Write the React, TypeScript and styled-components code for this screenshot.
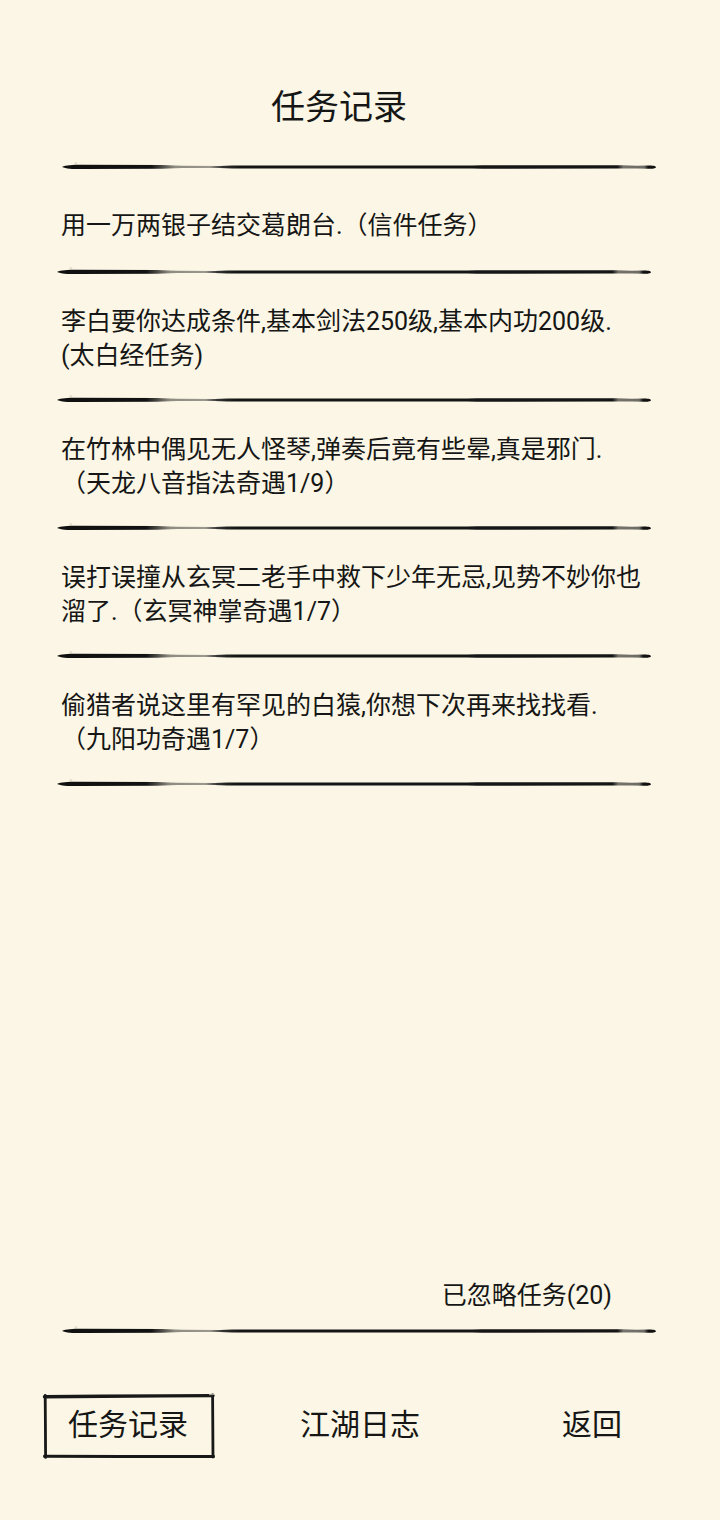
import React, { useId } from "react";
import styled, { createGlobalStyle } from "styled-components";

const PAPER = "#FBF6E5";
const INK = "#161616";

const GlobalStyle = createGlobalStyle`
  html, body {
    margin: 0;
    padding: 0;
    background: ${PAPER};
  }
  body {
    font-family: Roboto, "Noto Sans CJK SC", sans-serif;
    color: ${INK};
  }
`;

const Page = styled.div`
  width: 720px;
  height: 1520px;
  display: flex;
  flex-direction: column;
  background: ${PAPER};
  overflow: hidden;
`;

const Title = styled.h1`
  margin: 87px 42px 0 0;
  font-size: 34px;
  line-height: 40px;
  font-weight: 400;
  text-align: center;
`;

const Stroke = styled.svg<{ $offset: number; $gap?: number }>`
  display: block;
  flex: none;
  width: 594px;
  height: 10px;
  margin-left: ${(p) => p.$offset}px;
  margin-top: ${(p) => p.$gap ?? 0}px;
`;

/* Ink brush stroke used as a section divider */
const BrushLine: React.FC<{ offset: number; gap?: number }> = ({ offset, gap }) => {
  const id = useId().replace(/:/g, "");
  return (
    <Stroke $offset={offset} $gap={gap} viewBox="0 0 594 10" aria-hidden="true">
      <defs>
        <linearGradient id={`ink${id}`} gradientUnits="userSpaceOnUse" x1="0" y1="0" x2="594" y2="0">
          <stop offset="0" stopColor="#101010" />
          <stop offset="0.15" stopColor="#121212" />
          <stop offset="0.19" stopColor="#8f8c82" />
          <stop offset="0.25" stopColor="#9a978d" />
          <stop offset="0.27" stopColor="#333" />
          <stop offset="0.3" stopColor="#151515" />
          <stop offset="0.935" stopColor="#151515" />
          <stop offset="0.945" stopColor="#75736c" />
          <stop offset="0.98" stopColor="#6d6b65" />
          <stop offset="0.987" stopColor="#111" />
          <stop offset="1" stopColor="#111" />
        </linearGradient>
      </defs>
      <path
        fill={`url(#ink${id})`}
        d="M0,5 C4,3.1 10,2.8 20,2.8 L100,3.0 L120,3.8 L158,3.9 L170,3.4 L180,3.6 L410,3.6 L420,3.3 L560,3.3 L575,3.7 L586,3.5 C592,3.3 594,4.4 594,5.2 C594,6 592,6.9 586,6.7 L575,6.4 L560,6.6 L420,6.7 L410,6.4 L180,6.4 L170,6.6 L158,6.1 L120,6.0 L100,6.8 L20,7.1 C10,7.1 4,6.7 0,5 Z"
      />
      <ellipse cx="14" cy="0.9" rx="1.4" ry="0.5" fill="#c9c4b4" />
    </Stroke>
  );
};

const TaskList = styled.div`
  display: flex;
  flex-direction: column;
  margin-top: 11px;
`;

const TaskRow = styled.div`
  display: flex;
  flex-direction: column;
`;

const TaskText = styled.div<{ $first?: boolean }>`
  padding: ${(p) => (p.$first ? "26px 0 24px 61px" : "28px 0 22px 61px")};
  font-size: 25px;
  line-height: 34px;
`;

const TaskLine = styled.div`
  white-space: nowrap;
`;

const Spacer = styled.div`
  flex: 1;
`;

const IgnoredLink = styled.div`
  padding-right: 108px;
  text-align: right;
  font-size: 25px;
  line-height: 34px;
`;

const TabBar = styled.nav`
  display: grid;
  grid-template-columns: repeat(3, 232px);
  padding: 0 12px;
  margin-top: 58px;
  margin-bottom: 62px;
`;

const Tab = styled.div`
  position: relative;
  justify-self: center;
  width: 171px;
  height: 64px;
  display: flex;
  align-items: center;
  justify-content: center;
  font-size: 30px;
  line-height: 1;
  padding-bottom: 2px;
  box-sizing: border-box;
`;

const Frame = styled.svg`
  position: absolute;
  inset: 0;
  width: 171px;
  height: 64px;
  overflow: visible;
`;

/* Hand drawn frame around the selected tab */
const RoughFrame: React.FC = () => (
  <Frame viewBox="0 0 171 64" aria-hidden="true">
    <g fill="none" stroke="#181818" strokeLinecap="round">
      <path d="M1.5,2.8 L60,2.2 L120,1.9 L170,1.6" strokeWidth="3.4" />
      <path d="M2.2,1.5 L2.4,30 L2.6,63.4" strokeWidth="2.8" />
      <path d="M169.6,1 L169.8,32 L170,63" strokeWidth="2.8" />
      <path d="M1.5,62.2 L80,62.6 L170.5,62.4" strokeWidth="3" />
    </g>
    <path d="M166,0.6 L171,0.4" stroke="#9a978d" strokeWidth="1.2" />
  </Frame>
);

type Task = { lines: string[] };

const tasks: Task[] = [
  { lines: ["用一万两银子结交葛朗台.（信件任务）"] },
  { lines: ["李白要你达成条件,基本剑法250级,基本内功200级.", "(太白经任务)"] },
  { lines: ["在竹林中偶见无人怪琴,弹奏后竟有些晕,真是邪门.", "（天龙八音指法奇遇1/9）"] },
  { lines: ["误打误撞从玄冥二老手中救下少年无忌,见势不妙你也", "溜了.（玄冥神掌奇遇1/7）"] },
  { lines: ["偷猎者说这里有罕见的白猿,你想下次再来找找看.", "（九阳功奇遇1/7）"] },
];

const tabs = [
  { label: "任务记录", active: true },
  { label: "江湖日志", active: false },
  { label: "返回", active: false },
];

export default function App() {
  return (
    <>
      <GlobalStyle />
      <Page>
        <Title>任务记录</Title>
        <BrushLine offset={62} gap={35} />
        <TaskList>
          {tasks.map((task, i) => (
            <TaskRow key={i}>
              <TaskText $first={i === 0}>
                {task.lines.map((line, j) => (
                  <TaskLine key={j}>{line}</TaskLine>
                ))}
              </TaskText>
              <BrushLine offset={57} />
            </TaskRow>
          ))}
        </TaskList>
        <Spacer />
        <IgnoredLink>已忽略任务(20)</IgnoredLink>
        <BrushLine offset={62} gap={13} />
        <TabBar>
          {tabs.map((t) => (
            <Tab key={t.label}>
              {t.active && <RoughFrame />}
              {t.label}
            </Tab>
          ))}
        </TabBar>
      </Page>
    </>
  );
}
